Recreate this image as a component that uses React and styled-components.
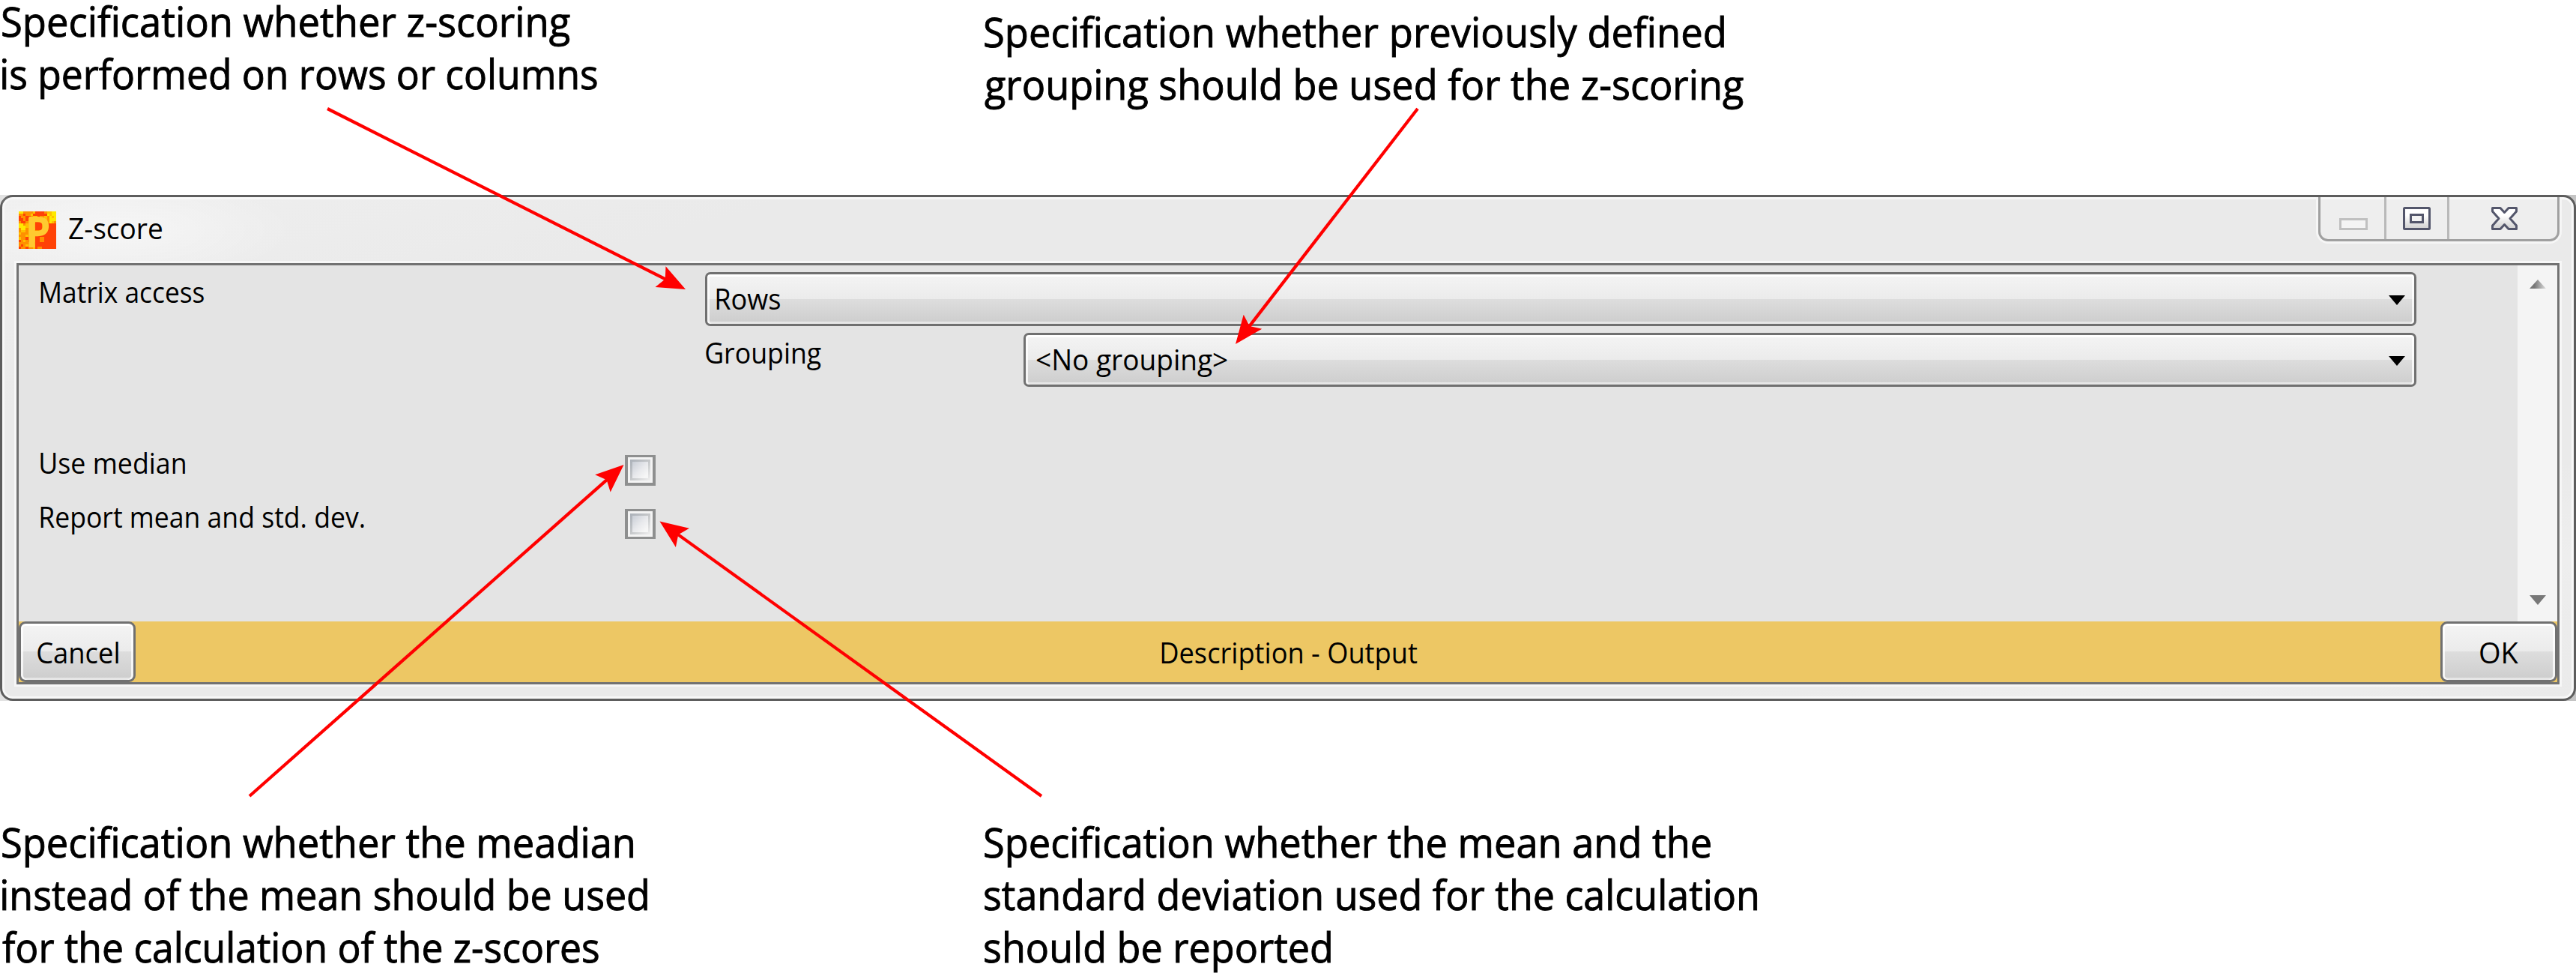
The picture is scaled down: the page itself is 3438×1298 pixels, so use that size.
import React, { useLayoutEffect, useState } from "react";
import styled, { createGlobalStyle } from "styled-components";

const Global = createGlobalStyle`
  *, *::before, *::after { box-sizing: border-box; }
  html, body { margin: 0; background: #fff; }
  body { overflow: hidden; color: #000; font-family: "Open Sans", "Noto Sans", sans-serif; }
`;

const NOTE_SIZE = 54;
const UI_SIZE = 39;

/* ---------- text stretched to a given ink width ---------- */

const FitBox = styled.span`
  display: block;
  flex: none;
  width: ${(p) => p.$width}px;
  height: ${(p) => p.$line}px;
  line-height: ${(p) => p.$line}px;
  font-family: ${(p) => p.$family};
  font-size: ${(p) => p.$size}px;
  -webkit-text-stroke: ${(p) => p.$stroke}px #000;
  white-space: nowrap;
`;

const FitInner = styled.span`
  display: inline-block;
  transform-origin: 0 50%;
`;

function Fit({ width, size = UI_SIZE, line = 54, stroke = 0, family = '"Open Sans", "Noto Sans", sans-serif', children }) {
  const [transform, setTransform] = useState("none");
  useLayoutEffect(() => {
    const ctx = document.createElement("canvas").getContext("2d");
    ctx.font = `${size}px ${family}`;
    const m = ctx.measureText(children);
    const scale = width / (m.actualBoundingBoxRight + m.actualBoundingBoxLeft);
    setTransform(`translateX(${m.actualBoundingBoxLeft * scale}px) scaleX(${scale})`);
  }, [children, width, size, family]);
  return (
    <FitBox $width={width} $line={line} $size={size} $stroke={stroke} $family={family}>
      <FitInner style={{ transform }}>{children}</FitInner>
    </FitBox>
  );
}

/* ---------- page ---------- */

const Page = styled.main`
  position: relative;
  display: flex;
  flex-direction: column;
  width: 3438px;
  height: 1298px;
  overflow: hidden;
  background: #fff;
`;

const NoteRow = styled.section`
  display: grid;
  grid-template-columns: 1311px 1fr;
  flex: none;
  height: ${(p) => p.$height}px;
`;

const Note = styled.div`
  padding-left: 3px;
  margin-top: ${(p) => p.$top}px;
`;

const NoteText = ({ lines }) =>
  lines.map(([text, width]) => (
    <Fit key={text} width={width} size={NOTE_SIZE} line={70} stroke={0.9}>
      {text}
    </Fit>
  ));

/* ---------- window ---------- */

const Backdrop = styled.section`
  flex: none;
  height: 675px;
  background: linear-gradient(90deg, #e2e2e2 0 20px, #fff 20px 3418px, #c4c4c4 3418px);
`;

const Frame = styled.div`
  display: flex;
  flex-direction: column;
  height: 100%;
  border: 3px solid #5d5d5d;
  border-radius: 17px;
  background: linear-gradient(165deg, #efefef 0, #eaeaea 18%, #eaeaea 80%, #eeeeee 88%, #eaeaea 100%);
  box-shadow: inset 0 0 0 3px #f8f8f8;
`;

const TitleBar = styled.header`
  display: flex;
  align-items: flex-start;
  flex: none;
  height: 88px;
  padding: 0 19px 0 22px;
  background: radial-gradient(ellipse 240px 70px at 150px 44px, rgba(255, 255, 255, 0.5), rgba(255, 255, 255, 0));
`;

const AppIcon = styled.svg`
  display: block;
  flex: none;
  width: 50px;
  height: 50px;
  margin-top: 19px;
  overflow: visible;
`;

const Title = styled.div`
  margin: 14px 0 0 17px;
`;

const Caption = styled.div`
  display: flex;
  width: 322px;
  height: 59px;
  margin-left: auto;
  border: 3px solid #a0a0a0;
  border-top: 0;
  border-radius: 0 0 13px 13px;
  background: #eeeeee;
  box-shadow: 0 0 0 3px #f6f6f6;
  clip-path: inset(0 -3px -3px -3px);
`;

const CaptionButton = styled.div`
  display: flex;
  flex: none;
  width: ${(p) => p.$width}px;
  padding: 13px 0 0 ${(p) => p.$pad}px;
  background: linear-gradient(#f8f8f8 3px, transparent 3px);

  & + & {
    border-left: 3px solid #b9b9b9;
  }

  svg {
    display: block;
    flex: none;
  }
`;

const Client = styled.div`
  display: flex;
  flex-direction: column;
  flex: 1;
  margin: 0 19px 19px;
  border: 3px solid #727272;
  box-shadow: 0 0 0 3px #f7f7f7;
  background: #e4e4e4;
`;

const Body = styled.div`
  display: flex;
  flex: 1;
`;

const Form = styled.div`
  flex: 1;
  padding: 9px 135px 0 28px;
`;

const FormRow = styled.div`
  display: flex;
  align-items: flex-start;
  height: 72px;
  margin-top: ${(p) => p.$gap || 0}px;
  padding-left: ${(p) => p.$indent || 0}px;
`;

const LabelCell = styled.div`
  flex: none;
  width: ${(p) => p.$width}px;
  margin-top: -1px;
  padding-left: 1px;
`;

const glass = `
  border: 3px solid #707070;
  background: linear-gradient(#f4f4f4 0, #ebebeb 50%, #dddddd 50%, #cdcdcd 100%);
  box-shadow: inset 0 3px 0 #fff, inset 3px 0 0 rgba(255,255,255,.75), inset -3px 0 0 rgba(255,255,255,.75), inset 0 -3px 0 #e6e6e6;
`;

const Combo = styled.div`
  display: flex;
  align-items: center;
  justify-content: space-between;
  flex: 1;
  height: 72px;
  padding: 0 12px 2px ${(p) => p.$pad}px;
  border-radius: 7px;
  ${glass}
`;

const ComboArrow = styled.svg`
  display: block;
  width: 22px;
  height: 13px;
  margin-top: 4px;
`;

const Check = styled.div`
  flex: none;
  width: 41px;
  height: ${(p) => 37 + p.$bottom}px;
  margin-top: 16px;
  padding: 3px;
  border: 4px solid #8e8f8f;
  border-top-width: 3px;
  border-bottom-width: ${(p) => p.$bottom}px;
  background: #f4f4f4;
`;

const CheckWell = styled.div`
  height: 100%;
  padding: 3px;
  background: linear-gradient(135deg, #aab0b8 0, #c6c8ca 50%, #f0f0f0 100%);

  &::after {
    content: "";
    display: block;
    height: 100%;
    background: linear-gradient(135deg, #c9ced6 0, #e8e9ec 50%, #f6f6f6 85%);
  }
`;

const ScrollBar = styled.div`
  display: flex;
  flex-direction: column;
  justify-content: space-between;
  align-items: center;
  flex: none;
  width: 53px;
  padding: 19px 0 22px;
  background: #f4f4f4;

  svg {
    display: block;
  }
`;

const Footer = styled.footer`
  display: flex;
  justify-content: space-between;
  align-items: center;
  flex: none;
  height: 81px;
  background: #edc764;
`;

const Status = styled.div`
  padding-left: 2px;
`;

const Button = styled.button`
  display: flex;
  align-items: center;
  justify-content: center;
  width: 156px;
  height: 81px;
  padding: 0 0 0 1px;
  color: #000;
  border-radius: 9px;
  ${glass}
`;

/* ---------- drawings ---------- */

const MOSAIC = [
  "yyoooogrrrroggyy",
  "ooroogrrrrrrygyy",
  "roorroggroogoygy",
  "rrorgggoogggoyyy",
  "orrogggrrrggoygo",
  "yyogggorrrogrrrr",
  "yyygggorrroorrrr",
  "oyyogggrrrogrrrr",
  "oggoggoooooorrrr",
  "goooggorrorrrrrr",
  "ooogoggrrrrrrrrr",
  "gooroggrroorrrrr",
  "rogorggrroorrrrr",
  "ooooogorrrrrrrrr",
  "orogoogrrrrrrrrr",
  "rooroogroorrrrrr",
];
const MOSAIC_COLOURS = { y: "#ffe800", g: "#ffc000", o: "#ff9000", r: "#ff4206" };

const Logo = () => (
  <AppIcon viewBox="0 0 16 16">
    <g shapeRendering="crispEdges">
      {MOSAIC.map((row, y) =>
        [...row].map((c, x) => (
          <rect key={`${x}-${y}`} x={x} y={y} width="1" height="1" fill={MOSAIC_COLOURS[c]} />
        ))
      )}
    </g>
    <text
      x="2.8"
      y="15.2"
      fontFamily="Open Sans, sans-serif"
      fontSize="18.2"
      fontWeight="700"
      fill="#ffca30"
      textLength="10.8"
      lengthAdjust="spacingAndGlyphs"
    >
      P
    </text>
  </AppIcon>
);

const Triangle = ({ fill }) => (
  <ComboArrow viewBox="0 0 22 13">
    <path d="M0 0h22L11 13z" fill={fill} />
  </ComboArrow>
);

const ArrowLayer = styled.svg`
  position: absolute;
  inset: 0;
  width: 3438px;
  height: 1298px;
  pointer-events: none;
`;

const ARROWS = [
  { from: [437, 145], to: [915, 386] },
  { from: [1892, 145], to: [1649, 459] },
  { from: [333, 1062], to: [832.5, 620] },
  { from: [1390, 1062], to: [880.5, 695.5] },
];

function Arrow({ from, to }) {
  const length = Math.hypot(to[0] - from[0], to[1] - from[1]);
  const angle = (Math.atan2(to[1] - from[1], to[0] - from[0]) * 180) / Math.PI;
  return (
    <g transform={`translate(${to[0]} ${to[1]}) rotate(${angle})`} fill="#f00">
      <rect x={-length} y="-2.1" width={length - 28} height="4.2" />
      <path d="M0 0-37.5-15.5-30.5 0-37.5 15.5z" />
    </g>
  );
}

export default function App() {
  return (
    <Page>
      <Global />
      <NoteRow $height={260}>
        <Note $top={-7}>
          <NoteText
            lines={[
              ["Specification whether z-scoring", 758],
              ["is performed on rows or columns", 794],
            ]}
          />
        </Note>
        <Note $top={7}>
          <NoteText
            lines={[
              ["Specification whether previously defined", 987],
              ["grouping should be used for the z-scoring", 1013],
            ]}
          />
        </Note>
      </NoteRow>

      <Backdrop>
        <Frame>
          <TitleBar>
            <Logo />
            <Title>
              <Fit width={124}>Z-score</Fit>
            </Title>
            <Caption>
              <CaptionButton $width={85} $pad={25}>
                <svg width="38" height="31" viewBox="0 0 38 31">
                  <rect x="1.5" y="16.5" width="35" height="13" fill="#f4f4f4" stroke="#c0c0c0" strokeWidth="3" />
                </svg>
              </CaptionButton>
              <CaptionButton $width={84} $pad={22}>
                <svg width="37" height="31" viewBox="0 0 37 31">
                  <defs>
                    <linearGradient id="steel" x1="0" y1="0" x2="0" y2="1">
                      <stop offset="0.35" stopColor="#fff" />
                      <stop offset="1" stopColor="#cfcfcf" />
                    </linearGradient>
                  </defs>
                  <rect x="1.5" y="1.5" width="34" height="28" rx="1" fill="url(#steel)" stroke="#53566b" strokeWidth="3" />
                  <rect x="10.5" y="10.5" width="16" height="10" fill="#f2f2f2" stroke="#53566b" strokeWidth="3" />
                </svg>
              </CaptionButton>
              <CaptionButton $width={147} $pad={56}>
                <svg width="35" height="31" viewBox="0 0 35 31">
                  <path
                    d="M1.5 1.5H12L17.5 7.5 23 1.5H33.5V6L25 15.5 33.5 25V29.5H23L17.5 23.5 12 29.5H1.5V25L10 15.5 1.5 6z"
                    fill="url(#steel)"
                    stroke="#53566b"
                    strokeWidth="3"
                    strokeLinejoin="round"
                  />
                </svg>
              </CaptionButton>
            </Caption>
          </TitleBar>

          <Client>
            <Body>
              <Form>
                <FormRow>
                  <LabelCell $width={888}>
                    <Fit width={218}>Matrix access</Fit>
                  </LabelCell>
                  <Combo $pad={12}>
                    <Fit width={85}>Rows</Fit>
                    <Triangle fill="#000" />
                  </Combo>
                </FormRow>
                <FormRow $gap={9} $indent={888}>
                  <LabelCell $width={425}>
                    <Fit width={154}>Grouping</Fit>
                  </LabelCell>
                  <Combo $pad={14}>
                    <Fit width={255}>{"<No grouping>"}</Fit>
                    <Triangle fill="#000" />
                  </Combo>
                </FormRow>
                <FormRow $gap={75}>
                  <LabelCell $width={781}>
                    <Fit width={193}>Use median</Fit>
                  </LabelCell>
                  <Check $bottom={4}>
                    <CheckWell />
                  </Check>
                </FormRow>
                <FormRow>
                  <LabelCell $width={781}>
                    <Fit width={432}>Report mean and std. dev.</Fit>
                  </LabelCell>
                  <Check $bottom={3}>
                    <CheckWell />
                  </Check>
                </FormRow>
              </Form>
              <ScrollBar>
                <svg width="22" height="12" viewBox="0 0 22 12">
                  <defs>
                    <linearGradient id="thumb">
                      <stop offset="0.3" stopColor="#777" />
                      <stop offset="1" stopColor="#ddd" />
                    </linearGradient>
                  </defs>
                  <path d="M0 12 11 0l11 12z" fill="url(#thumb)" />
                </svg>
                <svg width="22" height="13" viewBox="0 0 22 13">
                  <path d="M0 0h22L11 13z" fill="#777" />
                </svg>
              </ScrollBar>
            </Body>
            <Footer>
              <Button>
                <Fit width={108}>Cancel</Fit>
              </Button>
              <Status>
                <Fit width={341}>Description - Output</Fit>
              </Status>
              <Button>
                <Fit width={51}>OK</Fit>
              </Button>
            </Footer>
          </Client>
        </Frame>
      </Backdrop>

      <NoteRow $height={363}>
        <Note $top={153}>
          <NoteText
            lines={[
              ["Specification whether the meadian", 842],
              ["instead of the mean should be used", 861],
              ["for the calculation of the z-scores", 796],
            ]}
          />
        </Note>
        <Note $top={153}>
          <NoteText
            lines={[
              ["Specification whether the mean and the", 969],
              ["standard deviation used for the calculation", 1031],
              ["should be reported", 462],
            ]}
          />
        </Note>
      </NoteRow>

      <ArrowLayer viewBox="0 0 3438 1298">
        {ARROWS.map((a) => (
          <Arrow key={a.to[0]} {...a} />
        ))}
      </ArrowLayer>
    </Page>
  );
}
